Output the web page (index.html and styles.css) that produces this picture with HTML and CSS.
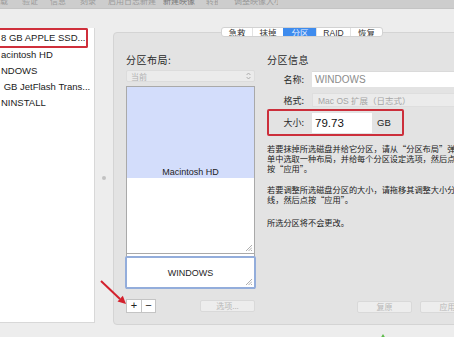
FILE: index.html
```html
<!DOCTYPE html>
<html lang="zh-CN">
<head>
<meta charset="utf-8">
<title>磁盘工具 - 分区</title>
<link rel="stylesheet" href="styles.css">
</head>
<body>
<div class="toolbar">
  <span class="tb w1">载</span>
  <span class="tb w2">验证</span>
  <span class="tb w3">信息</span>
  <span class="tb w4">刻录</span>
  <span class="tb w5">启用日志新建</span>
  <span class="tb w6 strong">新建映像</span>
  <span class="tb w7">转换</span>
  <span class="tb w8">调整映像大小</span>
</div>
<div class="main">
  <aside class="sidebar">
    <div class="row sel">8 GB APPLE SSD...</div>
    <div class="row">acintosh HD</div>
    <div class="row">NDOWS</div>
    <div class="row">&nbsp;GB JetFlash Trans...</div>
    <div class="row">NINSTALL</div>
  </aside>
  <div class="splitter"><span class="dot"></span></div>
  <section class="panel">
    <nav class="tabs">
      <span class="tab t1">急救</span>
      <span class="tab t2">抹掉</span>
      <span class="tab t3 active">分区</span>
      <span class="tab t4">RAID</span>
      <span class="tab t5">恢复</span>
    </nav>
    <div class="cols">
      <div class="left">
        <h2 class="title">分区布局:</h2>
        <div class="popup">
          <span>当前</span>
          <svg class="chev" width="5" height="8" viewBox="0 0 5 8"><path d="M0.6 3 L2.5 1 L4.4 3 M0.6 5 L2.5 7 L4.4 5" fill="none" stroke="#a8a8a8" stroke-width="0.9"/></svg>
        </div>
        <div class="map">
          <div class="part p1"><span>Macintosh HD</span></div>
          <div class="part p2">
            <svg class="grip" width="7" height="7" viewBox="0 0 7 7"><path d="M1 7 L7 1 M3.5 7 L7 3.5 M6 7 L7 6" stroke="#9a9a9a" stroke-width="0.8"/></svg>
          </div>
          <div class="part p3">
            <span>WINDOWS</span>
            <svg class="grip" width="7" height="7" viewBox="0 0 7 7"><path d="M1 7 L7 1 M3.5 7 L7 3.5 M6 7 L7 6" stroke="#9a9a9a" stroke-width="0.8"/></svg>
          </div>
        </div>
        <div class="leftbar">
          <div class="pm"><span class="pmb">+</span><span class="pmb">−</span></div>
          <span class="btn opt">选项...</span>
        </div>
      </div>
      <div class="right">
        <h2 class="title">分区信息</h2>
        <div class="frow r1"><span class="lbl">名称:</span><span class="input name">WINDOWS</span></div>
        <div class="frow r2"><span class="lbl">格式:</span><span class="fmt">Mac OS 扩展（日志式）</span></div>
        <div class="frow size"><span class="lbl">大小:</span><span class="input num">79.73</span><span class="unit">GB</span></div>
        <div class="desc">
          <p>若要抹掉所选磁盘并给它分区，请从“分区布局”弹出式菜<br>单中选取一种布局，并给每个分区设定选项，然后点<br>按“应用”。</p>
          <p class="p2t">若要调整所选磁盘分区的大小，请拖移其调整大小分隔<br>线，然后点按“应用”。</p>
          <p class="p3t">所选分区将不会更改。</p>
        </div>
        <div class="actions"><span class="btn">复原</span><span class="btn">应用</span></div>
      </div>
    </div>
  </section>
</div>
<div class="footer"><span class="green"></span></div>
<svg class="arrow" width="454" height="337" viewBox="0 0 454 337">
  <line x1="101" y1="281" x2="120" y2="299" stroke="#d3212d" stroke-width="2"/>
  <polygon points="126,304 117.5,301.5 122.8,295.8" fill="#d3212d"/>
</svg>
</body>
</html>
```
FILE: styles.css
```css
* { box-sizing: border-box; margin: 0; padding: 0; }
html, body { width: 454px; height: 337px; overflow: hidden; }
body {
  background: #ededed;
  font-family: "Liberation Sans", "Noto Sans CJK SC", sans-serif;
  color: #222;
  position: relative;
}
.toolbar {
  height: 9px;
  background: #cdcdcd;
  border-bottom: 1px solid #c4c4c4;
  display: flex;
  overflow: hidden;
  font-size: 8px;
  line-height: 8px;
  color: #9a9a9a;
  font-family: "Noto Sans CJK SC", sans-serif;
}
.tb { margin-top: -3px; white-space: nowrap; overflow: hidden; }
.tb.strong { color: #777; }
.w1 { width: 10px; }
.w2 { width: 16px; margin-left: 12px; }
.w3 { width: 16px; margin-left: 12px; }
.w4 { width: 16px; margin-left: 14px; }
.w5 { width: 48px; margin-left: 12px; }
.w6 { width: 33px; margin-left: 7px; }
.w7 { width: 12px; margin-left: 10px; }
.w8 { width: 44px; margin-left: 16px; }

.main { display: flex; align-items: flex-start; height: 320px; }

.sidebar {
  width: 95px;
  height: 295px;
  margin-top: 19px;
  background: #fff;
  border-right: 1px solid #d8d8d8;
  border-bottom: 1px solid #d8d8d8;
  font-size: 9.5px;
  color: #1a1a1a;
  flex-shrink: 0;
}
.row { height: 16px; line-height: 16px; white-space: nowrap; overflow: hidden; padding-left: 1px; }
.row.sel {
  height: 20px;
  line-height: 16px;
  width: 88px;
  border: 2px solid #cf2f3b;
  border-left: 0;
  border-radius: 0 2px 2px 0;
  margin-bottom: -1px;
}

.splitter {
  width: 18px;
  height: 318px;
  flex-shrink: 0;
  display: flex;
  justify-content: center;
  padding-top: 167px;
}
.dot { width: 4px; height: 4px; border-radius: 50%; background: #c2c2c2; }

.panel {
  width: 378px;
  flex-shrink: 0;
  margin-top: 23px;
  height: 293px;
  background: #e3e3e3;
  border: 1px solid #d4d4d4;
  border-radius: 4px;
  padding: 0 15px 11px 12px;
  display: flex;
  flex-direction: column;
}
.tabs {
  align-self: center;
  margin: -6px 0 0 3px;
  height: 13px;
  display: flex;
  background: #fff;
  border: 1px solid #d2d2d2;
  border-radius: 3px;
  font-family: "Liberation Sans", "Noto Sans CJK SC", sans-serif;
  font-size: 8.5px;
  line-height: 11px;
  color: #333;
  overflow: hidden;
}
.tab { text-align: center; border-left: 1px solid #e2e2e2; }
.tab.t1 { width: 30px; border-left: 0; }
.tab.t2 { width: 31px; }
.tab.t3 { width: 33px; }
.tab.t4 { width: 34px; }
.tab.t5 { width: 32px; }
.tab.active { background: #3f8cee; color: #eaf2ff; border-left-color: #3f8cee; }

.cols { display: flex; gap: 12px; flex: 1; }
.left { width: 129px; display: flex; flex-direction: column; flex-shrink: 0; }
.right { flex: 1; display: flex; flex-direction: column; min-width: 0; }

.title {
  margin-top: 16px;
  font-size: 10px;
  line-height: 14px;
  font-weight: normal;
  letter-spacing: 0.5px;
  color: #2a2a2a;
  font-family: "Noto Sans CJK SC", sans-serif;
}

.popup {
  margin-top: 3px;
  height: 12px;
  background: #ebebeb;
  border: 1px solid #dcdcdc;
  border-radius: 2px;
  display: flex;
  align-items: center;
  justify-content: space-between;
  padding: 0 3px 0 4px;
  font-size: 8px;
  color: #b0b0b0;
  font-family: "Noto Sans CJK SC", sans-serif;
}
.chev { display: block; }

.map {
  margin-top: 4px;
  height: 203px;
  border: 1px solid #a9a9a9;
  border-bottom: 0;
  display: flex;
  flex-direction: column;
  background: #fff;
}
.part { position: relative; display: flex; justify-content: center; font-size: 9px; color: #1e1e1e; }
.p1 { height: 91px; background: #d3ddfb; align-items: flex-end; padding-bottom: 1px; }
.p2 { height: 77px; background: #fff; border-bottom: 1px solid #a9a9a9; }
.p3 {
  height: 33px;
  margin: 2px -2px 0;
  border: 2px solid #93addb;
  border-radius: 2px;
  background: #fff;
  align-items: center;
}
.grip { position: absolute; right: 2px; bottom: 2px; }

.leftbar { margin-top: 10px; display: flex; align-items: center; justify-content: space-between; }
.pm { display: flex; border: 1px solid #c4c4c4; background: #fff; }
.pmb { width: 14px; height: 12px; line-height: 11px; text-align: center; font-size: 11px; color: #222; }
.pmb + .pmb { border-left: 1px solid #c4c4c4; }

.btn {
  width: 55px;
  height: 12px;
  line-height: 10px;
  text-align: center;
  font-size: 8px;
  color: #b7b7b7;
  background: #ededed;
  border: 1px solid #d9d9d9;
  border-radius: 2px;
  font-family: "Noto Sans CJK SC", sans-serif;
}

.frow { display: flex; align-items: center; }
.lbl {
  width: 37px;
  text-align: right;
  font-size: 9px;
  color: #2a2a2a;
  margin-right: 8px;
  font-family: "Noto Sans CJK SC", sans-serif;
  flex-shrink: 0;
}
.r1 { margin-top: 4px; height: 16px; }
.r2 { margin-top: 6px; height: 14px; }
.input {
  background: #fff;
  height: 16px;
  line-height: 16px;
  padding-left: 3px;
  flex: 1;
  border-top: 1px solid #dadada;
}
.input.name { font-size: 10px; color: #8c8c8c; }
.fmt {
  flex: 1;
  height: 14px;
  line-height: 14px;
  padding-left: 5px;
  background: #ebebeb;
  border: 1px solid #dedede;
  font-size: 8.5px;
  color: #a6a6a6;
  white-space: nowrap;
}
.size {
  margin-top: 2px;
  height: 27px;
  width: 137px;
  border: 2px solid #cc2f3b;
  border-radius: 2px;
}
.size .lbl { width: 35px; }
.input.num {
  flex: 0 0 60px;
  height: 20px;
  line-height: 20px;
  font-size: 11.5px;
  color: #111;
  border-top: 0;
}
.unit { margin-left: 5px; font-size: 9.5px; color: #222; }

.desc {
  margin-top: 7px;
  font-family: "Noto Sans CJK SC", sans-serif;
  font-feature-settings: "fwid";
  font-size: 8.2px;
  line-height: 10px;
  color: #222;
  white-space: nowrap;
  overflow: hidden;
}
.p2t { margin-top: 11px; }
.p3t { margin-top: 13px; }

.actions { margin-top: auto; display: flex; gap: 8px; padding-left: 90px; }

.footer { height: 8px; position: relative; }
.green {
  position: absolute;
  left: 380px;
  top: 5px;
  width: 0;
  height: 0;
  border-left: 3px solid transparent;
  border-right: 3px solid transparent;
  border-bottom: 5px solid #5dbb4a;
}
.arrow { position: absolute; left: 0; top: 0; pointer-events: none; }
```
